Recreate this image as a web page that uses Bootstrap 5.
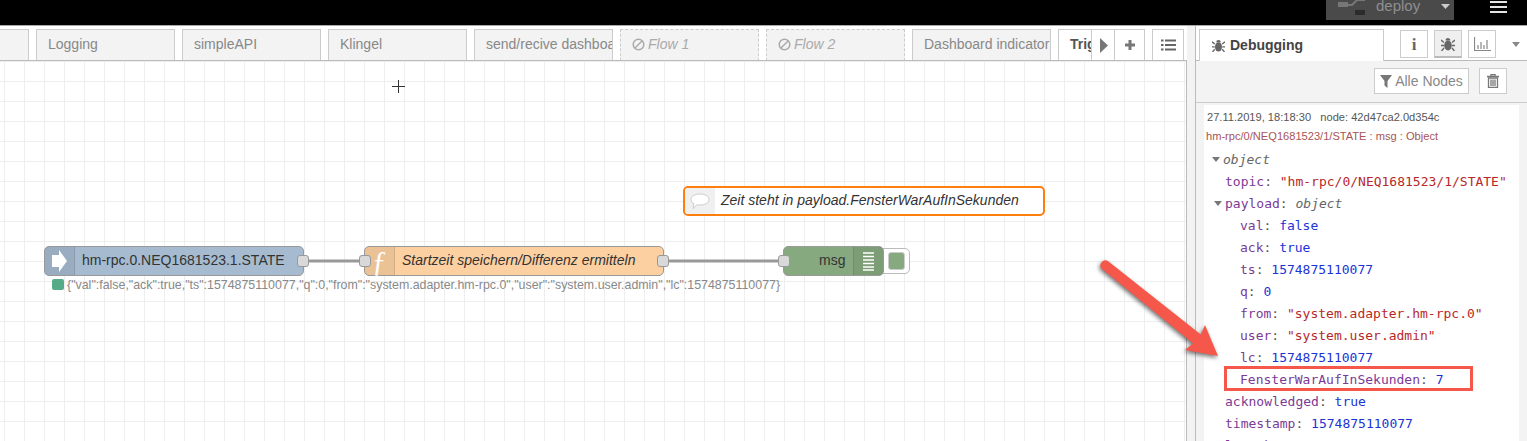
<!DOCTYPE html>
<html lang="de">
<head>
<meta charset="utf-8">
<title>Node-RED</title>
<link href="https://cdn.jsdelivr.net/npm/bootstrap@5.3.0/dist/css/bootstrap.min.css" rel="stylesheet">
<style>
html,body{height:441px;overflow:hidden;background:#fff;font-family:"Liberation Sans",Arial,sans-serif;}
.app-shell{position:relative;width:1527px;height:441px;overflow:hidden;}
.top-bar{height:26px;background:#000;border-bottom:1px solid #aaa;padding-right:20px;}
.deploy-btn{width:128px;height:20px;background:#4a4a4a;color:#8f8f8f;font-size:15px;line-height:14px;margin-right:36px;padding-left:12px;}
.deploy-label{margin-left:11px;margin-right:21px;position:relative;top:-1px;}
.menu-bars{width:17px;padding-top:1px;}
.menu-bars i{display:block;height:2px;background:#e4e4e4;margin-bottom:3px;}
.main-area{height:415px;}
.work-col{width:1187px;}
.tab-strip{height:35px;border-bottom:1px solid #bbb;padding-top:3px;gap:6.5px;overflow:hidden;position:relative;background:#fff;}
.flow-tab{flex:0 0 139.5px;height:31px;background:#f3f3f3;border:1px solid #ccc;border-bottom:0;color:#888;font-size:14px;line-height:29px;padding-left:11.5px;white-space:nowrap;overflow:hidden;}
.flow-tab.first-tab{flex-basis:29px;border-left:0;padding:0;}
.flow-tab.off-tab{border-style:dashed;color:#aaa;font-style:italic;border-bottom:0;height:32px;}
.flow-tab.off-tab svg{margin-right:3px;vertical-align:-2px;}
.flow-tab.cur-tab{background:#fff;color:#555;font-weight:700;height:32px;flex-basis:60px;}
.tab-tool{position:absolute;top:3px;height:32px;background:#fff;border:1px solid #ccc;display:flex;align-items:center;justify-content:center;}
.tab-tool.t1{left:1091px;width:24px;}
.tab-tool.t2{left:1114px;width:31px;}
.tab-tool.t3{left:1152px;width:32px;}
.flow-canvas{position:relative;height:380px;border-right:1px solid #bbb;overflow:hidden;
 background-color:#fff;background-image:linear-gradient(#eee 1px,transparent 1px),linear-gradient(90deg,#eee 1px,transparent 1px);background-size:20px 20px;background-position:4px 0;}
.wire-layer{position:absolute;left:0;top:0;}
.flow-node{position:absolute;height:30px;border:1px solid #999;border-radius:5px;color:#333;font-size:14px;line-height:27px;white-space:nowrap;}
.node-icon{position:absolute;left:0;top:0;bottom:0;width:30px;background:rgba(0,0,0,.07);border-right:1px solid rgba(0,0,0,.1);border-radius:4px 0 0 4px;display:flex;align-items:center;justify-content:center;}
.node-port{position:absolute;width:12px;height:12px;background:#d9d9d9;border:1px solid #999;border-radius:3px;top:8px;}
.port-r{right:-6px;}
.port-l{left:-6px;}
.n-inject{left:44px;top:185px;width:260px;background:#a6bbcf;padding-left:37px;}
.n-func{left:364px;top:185px;width:300px;background:#fdd0a2;padding-left:37px;font-style:italic;}
.fn-glyph{font-family:"Liberation Serif",serif;color:#fff;font-size:30px;font-style:normal;line-height:1;}
.n-debug{left:783px;top:185px;width:101px;background:#87a980;border-color:#999;padding-left:35px;z-index:2;}
.debug-end{position:absolute;right:0;top:0;bottom:0;width:30px;background:rgba(0,0,0,.07);border-left:1px solid rgba(0,0,0,.1);border-radius:0 4px 4px 0;display:flex;align-items:center;justify-content:center;}
.debug-toggle{position:absolute;left:880px;top:187px;width:30px;height:26px;background:#fff;border:1px solid #bbb;border-radius:0 5px 5px 0;display:flex;align-items:center;justify-content:flex-end;padding-right:4px;}
.debug-toggle i{display:block;width:17px;height:18px;background:#87a980;border-radius:3px;border:1px solid #ccc;}
.n-status{position:absolute;left:52px;top:218px;color:#888;font-size:12.4px;line-height:12px;white-space:nowrap;display:flex;gap:3px;}
.n-status i{display:block;width:12px;height:11px;background:#5a8;border-radius:2px;}
.n-comment{left:683px;top:125px;width:362px;background:#fff;border:2px solid #ff7f0e;padding-left:36px;line-height:25px;font-style:italic;}
.n-comment .node-icon{background:#f0f0f0;border-right:0;border-radius:3px 0 0 3px;}
.side-gap{width:8px;background:#f3f3f3;}
.side-col{flex:1;border-left:1px solid #bbb;background:#f3f3f3;min-width:0;}
.side-tabs{height:35px;background:#fff;border-bottom:1px solid #bbb;position:relative;padding-top:3px;padding-left:3px;}
.side-tab{width:185px;height:32px;background:#fff;border:1px solid #ccc;border-bottom:0;font-size:14px;font-weight:700;color:#444;line-height:30px;padding-left:12px;position:relative;z-index:1;}
.side-tab svg{margin-right:5px;vertical-align:-2px;}
.side-btn{width:28px;height:28px;background:#fff;border:1px solid #ccc;display:flex;align-items:center;justify-content:center;margin-left:6px;}
.side-btn.on-btn{background:#efefef;border-bottom:2px solid #bbb;}
.side-btns{margin-left:10px;margin-top:1px;height:28px;}
.info-glyph{font-family:"Liberation Serif",serif;font-weight:700;color:#666;font-size:17px;line-height:1;}
.caret-down{width:0;height:0;border-left:4px solid transparent;border-right:4px solid transparent;border-top:5px solid #888;margin-left:16px;align-self:center;}
.side-toolbar{height:42px;border-bottom:1px solid #ccc;padding:7px 20px 0 0;gap:10px;}
.tool-btn{height:26px;background:#fff;border:1px solid #ccc;color:#888;font-size:14px;line-height:24px;display:flex;align-items:center;justify-content:center;}
.tool-filter{width:95px;gap:3px;}
.tool-trash{width:28px;}
.msg-area{margin:2px 8px 0 8px;height:340px;background:#fff;overflow:hidden;padding-top:5px;}
.msg-meta{font-size:11.1px;line-height:14px;color:#555;padding-left:3px;white-space:pre;}
.msg-path{font-size:11.1px;line-height:14px;color:#a85454;padding-left:2px;margin-top:5px;white-space:pre;}
.tree-view{font-family:"DejaVu Sans Mono",monospace;font-size:13px;line-height:22px;color:#555;margin-top:6px;}
.tree-row{height:22px;position:relative;white-space:pre;}
.lvl-0{padding-left:19px;}
.lvl-1{padding-left:21px;}
.lvl-2{padding-left:36px;}
.k{color:#7b3a96;}
.s{color:#b72828;}
.v{color:#2033d6;}
.t{color:#666;font-style:italic;}
.tw{position:absolute;top:8px;width:0;height:0;border-left:4px solid transparent;border-right:4px solid transparent;border-top:5px solid #777;}
.tw-0{left:8px;}
.tw-1{left:10px;}
.note-frame{position:absolute;left:1224px;top:366px;width:249px;height:25px;border:3px solid #f5584b;pointer-events:none;}
.note-arrow{position:absolute;left:0;top:0;pointer-events:none;filter:drop-shadow(-1px 2px 2px rgba(0,0,0,.55));}
.cross-cursor{position:absolute;left:392px;top:19px;}
</style>
</head>
<body>
<div class="app-shell">
  <header class="top-bar d-flex justify-content-end align-items-start">
    <div class="deploy-btn d-flex align-items-start">
      <svg width="27" height="15" viewBox="0 0 27 15"><rect x="0" y="2" width="10" height="5" fill="#777"/><path d="M10 5h4l5-5h8" stroke="#777" fill="none" stroke-width="2"/><rect x="17" y="10" width="10" height="5" fill="#2c2c2c"/></svg>
      <span class="deploy-label">deploy</span>
      <svg class="mt-1" width="9" height="5" viewBox="0 0 9 5"><path d="M0 0h9L4.500 5z" fill="#ccc"/></svg>
    </div>
    <div class="menu-bars"><i></i><i></i><i></i></div>
  </header>
  <div class="main-area d-flex">
    <section class="work-col d-flex flex-column">
      <div class="tab-strip d-flex">
        <div class="flow-tab first-tab"></div>
        <div class="flow-tab">Logging</div>
        <div class="flow-tab">simpleAPI</div>
        <div class="flow-tab">Klingel</div>
        <div class="flow-tab">send/recive dashboard</div>
        <div class="flow-tab off-tab"><svg width="13" height="13" viewBox="0 0 13 13"><circle cx="6.500" cy="6.500" r="5.300" fill="none" stroke="#aaa" stroke-width="1.500"/><path d="M3 10l7-7" stroke="#aaa" stroke-width="1.500"/></svg>Flow 1</div>
        <div class="flow-tab off-tab"><svg width="13" height="13" viewBox="0 0 13 13"><circle cx="6.500" cy="6.500" r="5.300" fill="none" stroke="#aaa" stroke-width="1.500"/><path d="M3 10l7-7" stroke="#aaa" stroke-width="1.500"/></svg>Flow 2</div>
        <div class="flow-tab">Dashboard indicator</div>
        <div class="flow-tab cur-tab">Trigger</div>
        <div class="tab-tool t1"><svg width="9" height="15" viewBox="0 0 9 15"><path d="M1 0l8 7.500-8 7.500z" fill="#777"/></svg></div>
        <div class="tab-tool t2"><svg width="12" height="12" viewBox="0 0 12 12"><path d="M6 1v10M1 6h10" stroke="#777" stroke-width="3"/></svg></div>
        <div class="tab-tool t3"><svg width="15" height="12" viewBox="0 0 15 12"><path d="M4 1.500h11M4 6h11M4 10.500h11" stroke="#666" stroke-width="2"/><path d="M0 1.500h2.500M0 6h2.500M0 10.500h2.500" stroke="#666" stroke-width="2"/></svg></div>
      </div>
      <div class="flow-canvas">
        <svg class="wire-layer" width="1186" height="380"><path d="M304 200H364M664 200H783" stroke="#999" stroke-width="3" fill="none"/></svg>
        <svg class="cross-cursor" width="13" height="13" viewBox="0 0 13 13"><path d="M6.500 0v13M0 6.500h13" stroke="#333" stroke-width="1"/></svg>

        <div class="flow-node n-comment">
          <div class="node-icon"><svg width="20" height="17" viewBox="0 0 20 17"><path d="M10 1c5 0 9 2 9 5.500S15 12 10 12c-1 0-2 0-3-.2L3 15.500l1-4.700C2 9.800 1 8.300 1 6.500 1 3 5 1 10 1z" fill="#fff" stroke="#ccc"/></svg></div>
          Zeit steht in payload.FensterWarAufInSekunden
        </div>

        <div class="flow-node n-inject">
          <div class="node-icon"><svg width="15" height="22" viewBox="0 0 15 22"><path d="M0 5h7V0l8 11-8 11v-5H0z" fill="#fff"/></svg></div>
          hm-rpc.0.NEQ1681523.1.STATE
          <span class="node-port port-r"></span>
        </div>
        <div class="n-status"><i></i><span>{"val":false,"ack":true,"ts":1574875110077,"q":0,"from":"system.adapter.hm-rpc.0","user":"system.user.admin","lc":1574875110077}</span></div>

        <div class="flow-node n-func">
          <div class="node-icon"><span class="fn-glyph">ƒ</span></div>
          Startzeit speichern/Differenz ermitteln
          <span class="node-port port-l"></span>
          <span class="node-port port-r"></span>
        </div>

        <div class="debug-toggle"><i></i></div>
        <div class="flow-node n-debug">
          msg
          <div class="debug-end"><svg width="11" height="19" viewBox="0 0 11 19"><path d="M0 1h11M0 4.500h11M0 8h11M0 11.500h11M0 15h11M0 18h11" stroke="#fff" stroke-width="1.300"/></svg></div>
          <span class="node-port port-l"></span>
        </div>
      </div>
    </section>
    <div class="side-gap"></div>
    <aside class="side-col d-flex flex-column">
      <div class="side-tabs d-flex">
        <div class="side-tab"><svg width="13" height="13" viewBox="0 0 14 14"><g fill="#666"><ellipse cx="7" cy="8.500" rx="3.800" ry="5"/><path d="M4.500 3.500a2.500 2.500 0 0 1 5 0z"/><path d="M0 3l3 2.500M14 3l-3 2.500M0 8.500h3M14 8.500h-3M.5 14L3 11M13.500 14L11 11" stroke="#666" stroke-width="1.400" fill="none"/></g></svg>Debugging</div>
        <div class="side-btns d-flex">
          <div class="side-btn"><span class="info-glyph">i</span></div>
          <div class="side-btn on-btn"><svg width="14" height="14" viewBox="0 0 14 14"><g fill="#666"><ellipse cx="7" cy="8.500" rx="3.800" ry="5"/><path d="M4.500 3.500a2.500 2.500 0 0 1 5 0z"/><path d="M0 3l3 2.500M14 3l-3 2.500M0 8.500h3M14 8.500h-3M.5 14L3 11M13.500 14L11 11" stroke="#666" stroke-width="1.400" fill="none"/></g></svg></div>
          <div class="side-btn"><svg width="17" height="14" viewBox="0 0 17 14"><path d="M.5 0v13.500H17M4 12V8M7 12V5M10 12V8M13 12V3" stroke="#888" stroke-width="1.200" fill="none"/></svg></div>
          <div class="caret-down"></div>
        </div>
      </div>
      <div class="side-toolbar d-flex justify-content-end">
        <div class="tool-btn tool-filter"><svg width="12" height="13" viewBox="0 0 12 13"><path d="M0 0h12L7.500 6v7L4.500 10.500V6z" fill="#777"/></svg>Alle Nodes</div>
        <div class="tool-btn tool-trash"><svg width="12" height="14" viewBox="0 0 12 14"><path d="M0 2.500h12M4 2V.7h4V2" stroke="#777" stroke-width="1.300" fill="none"/><path d="M1.500 4h9v9.500h-9zM4 5.500v6.500M6 5.500v6.500M8 5.500v6.500" stroke="#777" stroke-width="1.300" fill="none"/></svg></div>
      </div>
      <div class="msg-area">
        <div class="msg-meta">27.11.2019, 18:18:30   node: 42d47ca2.0d354c</div>
        <div class="msg-path">hm-rpc/0/NEQ1681523/1/STATE : msg : Object</div>
        <div class="tree-view">
          <div class="tree-row lvl-0"><span class="tw tw-0"></span><span class="t">object</span></div>
          <div class="tree-row lvl-1"><span class="k">topic</span>: <span class="s">"hm-rpc/0/NEQ1681523/1/STATE"</span></div>
          <div class="tree-row lvl-1"><span class="tw tw-1"></span><span class="k">payload</span>: <span class="t">object</span></div>
          <div class="tree-row lvl-2"><span class="k">val</span>: <span class="v">false</span></div>
          <div class="tree-row lvl-2"><span class="k">ack</span>: <span class="v">true</span></div>
          <div class="tree-row lvl-2"><span class="k">ts</span>: <span class="v">1574875110077</span></div>
          <div class="tree-row lvl-2"><span class="k">q</span>: <span class="v">0</span></div>
          <div class="tree-row lvl-2"><span class="k">from</span>: <span class="s">"system.adapter.hm-rpc.0"</span></div>
          <div class="tree-row lvl-2"><span class="k">user</span>: <span class="s">"system.user.admin"</span></div>
          <div class="tree-row lvl-2"><span class="k">lc</span>: <span class="v">1574875110077</span></div>
          <div class="tree-row lvl-2"><span class="k">FensterWarAufInSekunden</span>: <span class="v">7</span></div>
          <div class="tree-row lvl-1"><span class="k">acknowledged</span>: <span class="v">true</span></div>
          <div class="tree-row lvl-1"><span class="k">timestamp</span>: <span class="v">1574875110077</span></div>
          <div class="tree-row lvl-1"><span class="k">lastchange</span>: <span class="v">1574875110077</span></div>
        </div>
      </div>
    </aside>
  </div>
  <svg class="note-arrow" width="1527" height="441"><path d="M1101.800 268.800A5 5 0 0 1 1108.200 261.200L1200.800 334.400L1205 325L1218 356L1185 350L1193.200 343.600Z" fill="#f5584b"/></svg>
  <div class="note-frame"></div>
</div>
<script src="https://cdn.jsdelivr.net/npm/bootstrap@5.3.0/dist/js/bootstrap.bundle.min.js"></script>
</body>
</html>
